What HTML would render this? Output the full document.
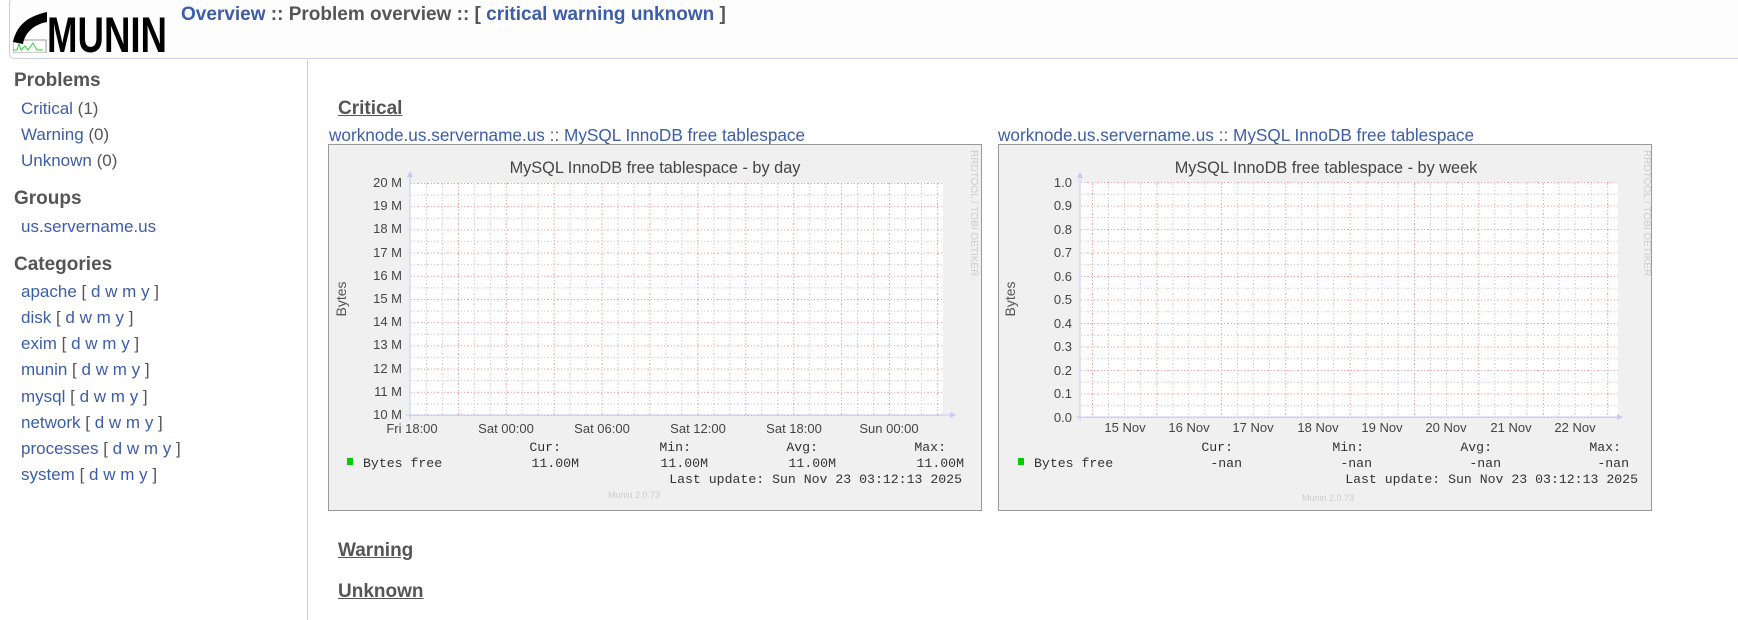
<!DOCTYPE html>
<html><head><meta charset="utf-8">
<style>
html,body{margin:0;padding:0;background:#fff;width:1738px;height:607px;overflow:hidden;font-family:"Liberation Sans",Arial,sans-serif;}
a{color:#3d5da8;text-decoration:none}
.hdr{position:absolute;left:9px;top:-2px;width:1740px;height:61px;border:1px solid #c8d0ee;border-radius:5px;background:#fdfdfd;box-sizing:border-box}
.logo{position:absolute;left:13px;top:10px}
.crumb{position:absolute;left:181px;top:4px;font-size:19px;font-weight:bold;color:#555}
.side{position:absolute;left:307px;top:60px;width:1px;height:560px;background:#c8d0ee}
.h{position:absolute;font-size:19px;font-weight:bold;color:#555}
.l{position:absolute;left:21px;font-size:17px;color:#555;white-space:nowrap}
.sec{position:absolute;left:338px;font-size:19px;font-weight:bold;color:#555;text-decoration:underline}
.gl{position:absolute;top:125px;font-size:17.2px;color:#555}
.g{position:absolute;top:144px;width:654px;height:367px}
svg text{font-family:"Liberation Sans",Arial,sans-serif}
.m{font-family:"Liberation Mono","DejaVu Sans Mono",monospace!important}
</style></head><body>
<div class="hdr"></div>
<svg class="logo" width="156" height="43" viewBox="0 0 156 43">
<rect x="0" y="30" width="33" height="13" fill="#fff" stroke="#999"/>
<path d="M0 32 C4 14 16 6 34 2 L34 12 C22 14 12 22 10 34 Z" fill="#000"/>
<path d="M0 40 L4 40 L6 34 L8 40 L12 36 L15 40 L20 33 L24 40 L30 40" stroke="#3c3" fill="none"/>
<text x="34" y="42" font-size="50" font-weight="bold" fill="#000" textLength="120" lengthAdjust="spacingAndGlyphs" style="font-family:'Liberation Sans Narrow','Liberation Sans',sans-serif">MUNIN</text>
</svg>
<div class="crumb"><a href="#">Overview</a> :: Problem overview :: [ <a href="#">critical</a> <a href="#">warning</a> <a href="#">unknown</a> ]</div>
<div class="side"></div>
<div class="h" style="left:14px;top:70px">Problems</div>
<div class="l" style="top:99px"><a href="#">Critical</a> (1)</div>
<div class="l" style="top:125px"><a href="#">Warning</a> (0)</div>
<div class="l" style="top:151px"><a href="#">Unknown</a> (0)</div>
<div class="h" style="left:14px;top:188px">Groups</div>
<div class="l" style="top:217px"><a href="#">us.servername.us</a></div>
<div class="h" style="left:14px;top:254px">Categories</div>
<div class="l" style="top:282px"><a href="#">apache</a> [ <a href="#">d</a> <a href="#">w</a> <a href="#">m</a> <a href="#">y</a> ]</div>
<div class="l" style="top:308px"><a href="#">disk</a> [ <a href="#">d</a> <a href="#">w</a> <a href="#">m</a> <a href="#">y</a> ]</div>
<div class="l" style="top:334px"><a href="#">exim</a> [ <a href="#">d</a> <a href="#">w</a> <a href="#">m</a> <a href="#">y</a> ]</div>
<div class="l" style="top:360px"><a href="#">munin</a> [ <a href="#">d</a> <a href="#">w</a> <a href="#">m</a> <a href="#">y</a> ]</div>
<div class="l" style="top:387px"><a href="#">mysql</a> [ <a href="#">d</a> <a href="#">w</a> <a href="#">m</a> <a href="#">y</a> ]</div>
<div class="l" style="top:413px"><a href="#">network</a> [ <a href="#">d</a> <a href="#">w</a> <a href="#">m</a> <a href="#">y</a> ]</div>
<div class="l" style="top:439px"><a href="#">processes</a> [ <a href="#">d</a> <a href="#">w</a> <a href="#">m</a> <a href="#">y</a> ]</div>
<div class="l" style="top:465px"><a href="#">system</a> [ <a href="#">d</a> <a href="#">w</a> <a href="#">m</a> <a href="#">y</a> ]</div>

<div class="sec" style="top:98px">Critical</div>
<div class="gl" style="left:329px"><a href="#">worknode.us.servername.us</a> :: <a href="#">MySQL InnoDB free tablespace</a></div>
<div class="gl" style="left:998px"><a href="#">worknode.us.servername.us</a> :: <a href="#">MySQL InnoDB free tablespace</a></div>

<svg class="g" style="left:328px" viewBox="0 0 654 367">
<defs>
<pattern id="h1" x="0" y="39" width="10" height="23.2" patternUnits="userSpaceOnUse"><line x1="0" y1="0.5" x2="10" y2="0.5" stroke="#f2a0a0" stroke-dasharray="1 2"/><line x1="0" y1="12.1" x2="10" y2="12.1" stroke="#ccc" stroke-dasharray="1 2"/></pattern>
<pattern id="v1" x="82" y="0" width="47.9" height="10" patternUnits="userSpaceOnUse"><line x1="0.5" y1="0" x2="0.5" y2="10" stroke="#f2a0a0" stroke-dasharray="1 2"/><line x1="16.5" y1="0" x2="16.5" y2="10" stroke="#ccc" stroke-dasharray="1 2"/><line x1="32.5" y1="0" x2="32.5" y2="10" stroke="#ccc" stroke-dasharray="1 2"/></pattern>
</defs>
<rect x="0.5" y="0.5" width="653" height="366" fill="#f0f0f0" stroke="#999"/>
<rect x="82" y="39" width="533" height="232" fill="#fff"/>
<rect x="82" y="39" width="533" height="233" fill="url(#h1)"/>
<rect x="83" y="39" width="533" height="232" fill="url(#v1)"/>
<line x1="82" y1="30" x2="82" y2="275" stroke="#c8c8f0"/><path d="M79 33 L82 27 L85 33Z" fill="#c8c8f0"/>
<line x1="78" y1="271" x2="625" y2="271" stroke="#c8c8f0"/><path d="M622 268 L628 271 L622 274Z" fill="#c8c8f0"/>
<text x="327" y="29" font-size="16.3" fill="#444" text-anchor="middle">MySQL InnoDB free tablespace - by day</text>
<g font-size="13" fill="#444" text-anchor="end">
<text x="74" y="43">20 M</text><text x="74" y="66">19 M</text><text x="74" y="89">18 M</text><text x="74" y="113">17 M</text><text x="74" y="136">16 M</text><text x="74" y="159">15 M</text><text x="74" y="182">14 M</text><text x="74" y="205">13 M</text><text x="74" y="229">12 M</text><text x="74" y="252">11 M</text><text x="74" y="275">10 M</text>
</g>
<g font-size="13" fill="#444" text-anchor="middle">
<text x="84" y="289">Fri 18:00</text><text x="178" y="289">Sat 00:00</text><text x="274" y="289">Sat 06:00</text><text x="370" y="289">Sat 12:00</text><text x="466" y="289">Sat 18:00</text><text x="561" y="289">Sun 00:00</text>
</g>
<text transform="translate(18 155) rotate(-90)" font-size="14" fill="#555" text-anchor="middle">Bytes</text>
<text transform="translate(643 6) rotate(90)" font-size="10" fill="#ccc">RRDTOOL / TOBI OETIKER</text>
<g font-size="13.2" fill="#333" text-anchor="end">
<text class="m" x="233" y="307">Cur:</text><text class="m" x="363" y="307">Min:</text><text class="m" x="490" y="307">Avg:</text><text class="m" x="618" y="307">Max:</text>
<text class="m" x="251" y="323">11.00M</text><text class="m" x="380" y="323">11.00M</text><text class="m" x="508" y="323">11.00M</text><text class="m" x="636" y="323">11.00M</text>
<text class="m" x="634" y="339">Last update: Sun Nov 23 03:12:13 2025</text>
</g>
<rect x="19" y="314" width="6" height="7" fill="#00cc00"/>
<text class="m" x="35" y="323" font-size="13.2" fill="#333">Bytes free</text>
<text x="306" y="354" font-size="9" fill="#ccc" text-anchor="middle">Munin 2.0.73</text>
</svg>

<svg class="g" style="left:998px" viewBox="0 0 654 367">
<defs>
<pattern id="h2" x="0" y="38" width="10" height="23.5" patternUnits="userSpaceOnUse"><line x1="0" y1="0.5" x2="10" y2="0.5" stroke="#f2a0a0" stroke-dasharray="1 2"/><line x1="0" y1="12.2" x2="10" y2="12.2" stroke="#ccc" stroke-dasharray="1 2"/></pattern>
<pattern id="v2" x="94" y="0" width="64.4" height="10" patternUnits="userSpaceOnUse"><line x1="0.5" y1="0" x2="0.5" y2="10" stroke="#f2a0a0" stroke-dasharray="1 2"/><line x1="16.5" y1="0" x2="16.5" y2="10" stroke="#ccc" stroke-dasharray="1 2"/><line x1="32.5" y1="0" x2="32.5" y2="10" stroke="#ccc" stroke-dasharray="1 2"/><line x1="48.5" y1="0" x2="48.5" y2="10" stroke="#ccc" stroke-dasharray="1 2"/></pattern>
</defs>
<rect x="0.5" y="0.5" width="653" height="366" fill="#f0f0f0" stroke="#999"/>
<rect x="82" y="38" width="538" height="235" fill="#fff"/>
<rect x="82" y="38" width="538" height="236" fill="url(#h2)"/>
<rect x="82" y="38" width="538" height="235" fill="url(#v2)"/>
<line x1="82" y1="30" x2="82" y2="277" stroke="#c8c8f0"/><path d="M79 34 L82 28 L85 34Z" fill="#c8c8f0"/>
<line x1="78" y1="273" x2="622" y2="273" stroke="#c8c8f0"/><path d="M619 270 L625 273 L619 276Z" fill="#c8c8f0"/>
<text x="328" y="29" font-size="16.3" fill="#444" text-anchor="middle">MySQL InnoDB free tablespace - by week</text>
<g font-size="13" fill="#444" text-anchor="end">
<text x="74" y="43">1.0</text><text x="74" y="66">0.9</text><text x="74" y="90">0.8</text><text x="74" y="113">0.7</text><text x="74" y="137">0.6</text><text x="74" y="160">0.5</text><text x="74" y="184">0.4</text><text x="74" y="207">0.3</text><text x="74" y="231">0.2</text><text x="74" y="254">0.1</text><text x="74" y="278">0.0</text>
</g>
<g font-size="13" fill="#444" text-anchor="middle">
<text x="127" y="288">15 Nov</text><text x="191" y="288">16 Nov</text><text x="255" y="288">17 Nov</text><text x="320" y="288">18 Nov</text><text x="384" y="288">19 Nov</text><text x="448" y="288">20 Nov</text><text x="513" y="288">21 Nov</text><text x="577" y="288">22 Nov</text>
</g>
<text transform="translate(17 155) rotate(-90)" font-size="14" fill="#555" text-anchor="middle">Bytes</text>
<text transform="translate(646 6) rotate(90)" font-size="10" fill="#ccc">RRDTOOL / TOBI OETIKER</text>
<g font-size="13.2" fill="#333" text-anchor="end">
<text class="m" x="235" y="307">Cur:</text><text class="m" x="366" y="307">Min:</text><text class="m" x="494" y="307">Avg:</text><text class="m" x="623" y="307">Max:</text>
<text class="m" x="244" y="323">-nan</text><text class="m" x="374" y="323">-nan</text><text class="m" x="503" y="323">-nan</text><text class="m" x="631" y="323">-nan</text>
<text class="m" x="640" y="339">Last update: Sun Nov 23 03:12:13 2025</text>
</g>
<rect x="20" y="314" width="6" height="7" fill="#00cc00"/>
<text class="m" x="36" y="323" font-size="13.2" fill="#333">Bytes free</text>
<text x="330" y="357" font-size="9" fill="#ccc" text-anchor="middle">Munin 2.0.73</text>
</svg>

<div class="sec" style="top:540px">Warning</div>
<div class="sec" style="top:581px">Unknown</div>
</body></html>
